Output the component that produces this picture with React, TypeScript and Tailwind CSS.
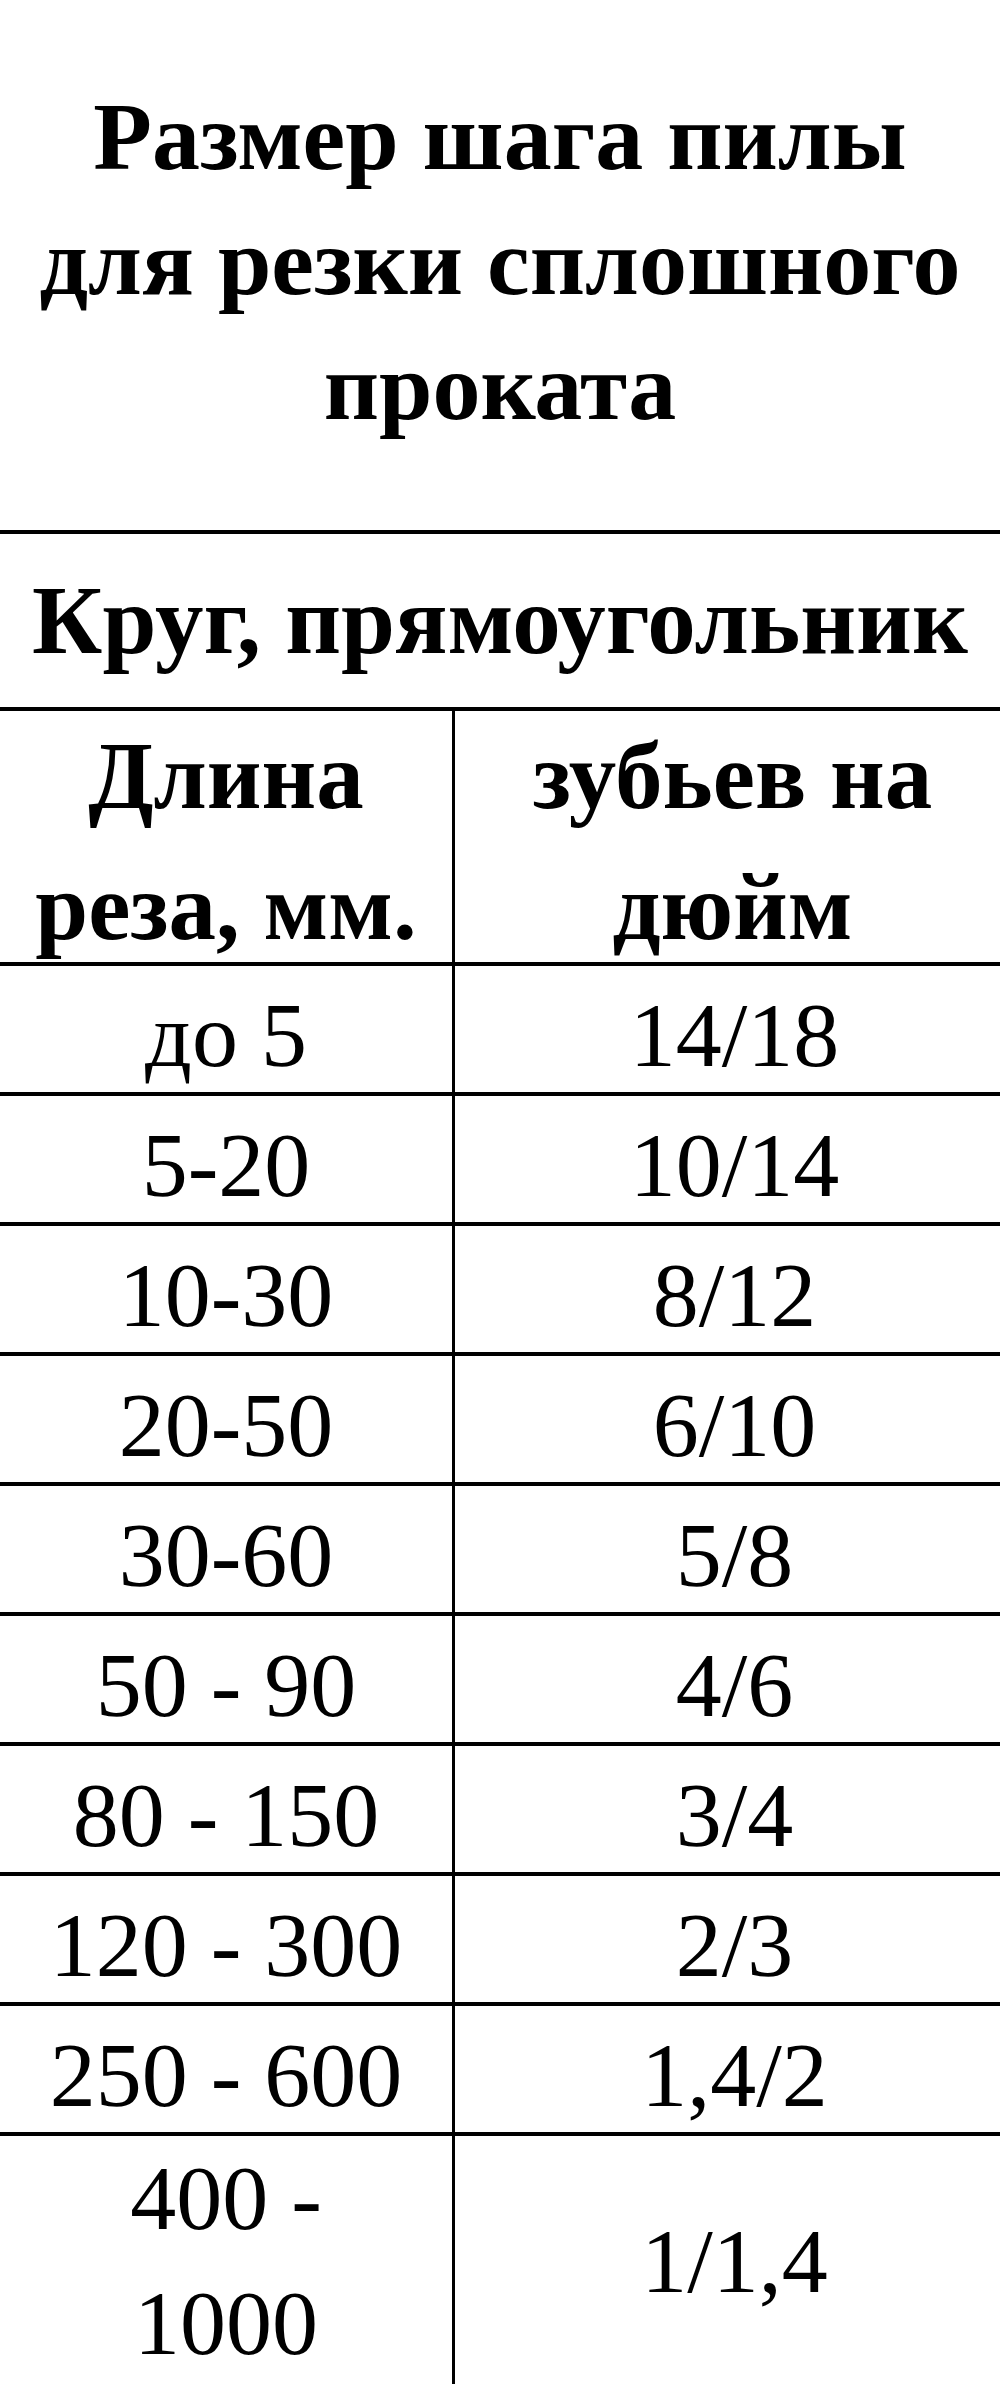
import React from "react";

const rows: [string, string][] = [
  ["до 5", "14/18"],
  ["5-20", "10/14"],
  ["10-30", "8/12"],
  ["20-50", "6/10"],
  ["30-60", "5/8"],
  ["50 - 90", "4/6"],
  ["80 - 150", "3/4"],
  ["120 - 300", "2/3"],
  ["250 - 600", "1,4/2"],
];

export default function App() {
  return (
    <div className="w-[1000px] bg-white text-black font-['Liberation_Serif',serif]">
      {/* title */}
      <div className="h-[530px] pt-[74px] text-center font-bold text-[96px] leading-[125px]">
        Размер шага пилы
        <br />
        для резки сплошного
        <br />
        проката
      </div>

      <div className="border-t-4 border-black">
        <div className="h-[177px] flex items-center justify-center border-b-4 border-black font-bold text-[97px]">
          Круг, прямоугольник
        </div>

        <div className="grid grid-cols-[455px_1fr] h-[255px] border-b-4 border-black font-bold text-[95px] leading-[131px] text-center">
          <div className="flex items-center justify-center border-r-[3px] border-black">
            <span>
              Длина
              <br />
              реза, мм.
            </span>
          </div>
          <div className="flex items-center justify-center pl-[10px]">
            <span>
              зубьев на
              <br />
              дюйм
            </span>
          </div>
        </div>

        {rows.map(([len, teeth]) => (
          <div
            key={len}
            className="grid grid-cols-[455px_1fr] h-[130px] border-b-4 border-black text-[92px]"
          >
            <div className="flex items-center justify-center border-r-[3px] border-black">{len}</div>
            <div className="flex items-center justify-center pl-[14px]">{teeth}</div>
          </div>
        ))}

        <div className="grid grid-cols-[455px_1fr] h-[250px] text-[92px] leading-[125px] text-center">
          <div className="flex items-center justify-center border-r-[3px] border-black">
            <span>
              400 -
              <br />
              1000
            </span>
          </div>
          <div className="flex items-center justify-center pl-[14px]">1/1,4</div>
        </div>
      </div>
    </div>
  );
}
